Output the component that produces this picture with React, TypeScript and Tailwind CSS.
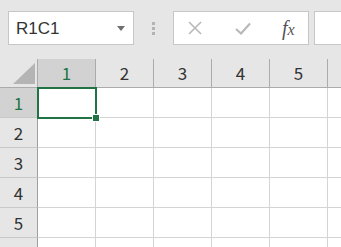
const cols = [1, 2, 3, 4, 5, 6]
const rows = [1, 2, 3, 4, 5, 6]

function ColHeader({ n }: { n: number }) {
  const sel = n === 1
  return (
    <div
      className={`h-[29px] border-r border-b border-[#ababab] flex items-center justify-center text-[17px] ${
        sel ? 'bg-[#d2d2d2] text-[#217346]' : 'bg-[#e6e6e6] text-[#333]'
      }`}
    >
      {n < 6 ? n : ''}
    </div>
  )
}

function RowHeader({ n }: { n: number }) {
  const sel = n === 1
  return (
    <div
      className={`h-[30px] border-r border-r-[#9e9e9e] border-b border-b-[#c8c8c8] flex items-center justify-center text-[17px] ${
        sel ? 'bg-[#d2d2d2] text-[#217346]' : 'bg-[#e6e6e6] text-[#333]'
      }`}
    >
      {n < 6 ? n : ''}
    </div>
  )
}

export default function App() {
  return (
    <div
      className="w-[341px] h-[247px] overflow-hidden bg-[#e6e6e6] select-none"
      style={{ fontFamily: '"Noto Sans CJK JP", "Noto Sans", sans-serif' }}
    >
      {/* formula bar */}
      <div className="h-[59px] pt-[11px] flex items-start">
        <div className="ml-[8px] w-[126px] h-[34px] bg-white border border-[#c6c6c6] flex items-center pl-[7px] pr-[8px]">
          <span className="text-[17px] text-[#333] leading-none" style={{ fontFamily: '"Liberation Sans", sans-serif' }}>
            R1C1
          </span>
          <svg className="ml-auto" width="8" height="5" viewBox="0 0 8 5">
            <path d="M0 0h8L4 5z" fill="#6f6f6f" />
          </svg>
        </div>
        <div className="w-[39px] h-[34px] flex flex-col items-center justify-center gap-[2px]">
          <div className="w-[3px] h-[3px] bg-[#b4b4b4]" />
          <div className="w-[3px] h-[3px] bg-[#b4b4b4]" />
          <div className="w-[3px] h-[3px] bg-[#b4b4b4]" />
        </div>
        <div className="w-[136px] h-[34px] bg-white border border-[#c6c6c6] flex items-center">
          <svg className="ml-[14px]" width="14" height="14" viewBox="0 0 14 14">
            <path d="M1 1L13 13M13 1L1 13" stroke="#b9b9b9" strokeWidth="1.6" />
          </svg>
          <svg className="ml-[33px]" width="16" height="13" viewBox="0 0 16 13">
            <path d="M1 7L6 11.5L15 1.5" stroke="#b9b9b9" strokeWidth="2.2" fill="none" />
          </svg>
          <span
            className="ml-[31px] text-[20px] italic text-[#555] leading-none"
            style={{ fontFamily: '"Liberation Serif", serif' }}
          >
            f<span className="text-[16px]">x</span>
          </span>
        </div>
        <div className="ml-[5px] flex-1 h-[34px] bg-white border-y border-l border-[#c6c6c6]" />
      </div>

      {/* grid */}
      <div className="relative grid grid-cols-[38px_repeat(6,58px)] bg-white">
        <div className="h-[29px] bg-[#e6e6e6] border-r border-b border-[#ababab] relative">
          <svg className="absolute left-[13px] top-[4px]" width="22" height="21" viewBox="0 0 22 21">
            <path d="M0 21L22 21L22 0z" fill="#b4b4b4" />
          </svg>
        </div>
        {cols.map((c) => (
          <ColHeader key={c} n={c} />
        ))}
        {rows.map((r) => (
          <div key={r} className="contents">
            <RowHeader n={r} />
            {cols.map((c) => (
              <div key={c} className="h-[30px] border-r border-b border-[#d4d4d4] bg-white" />
            ))}
          </div>
        ))}

        {/* active cell */}
        <div className="absolute left-[37px] top-[28px] w-[60px] h-[32px] border-2 border-[#217346]" />
        <div className="absolute left-[93px] top-[56px] w-[6px] h-[6px] bg-[#217346] outline outline-1 outline-white" />
      </div>
    </div>
  )
}
